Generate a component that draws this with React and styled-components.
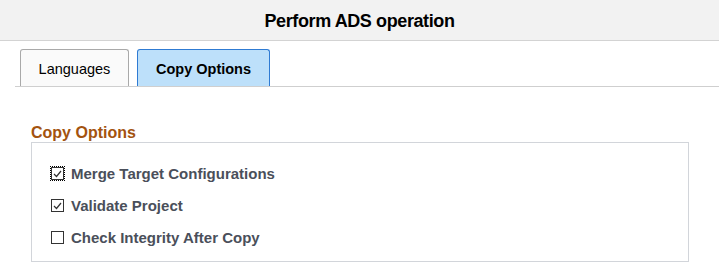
import React from "react";
import styled, { createGlobalStyle } from "styled-components";

const Global = createGlobalStyle`
  html, body { margin: 0; padding: 0; background: #ffffff; }
  body { font-family: "Liberation Sans", Arial, sans-serif; }
`;

const Page = styled.div`
  width: 719px;
  height: 268px;
  background: #fff;
  overflow: hidden;
`;

const Header = styled.header`
  height: 40px;
  background: #f2f2f2;
  border-bottom: 1px solid #d3d3d3;
  display: flex;
  align-items: center;
  justify-content: center;
`;

const Title = styled.h1`
  margin: 0;
  font-size: 18px;
  letter-spacing: -0.4px;
  font-weight: bold;
  color: #000;
  padding-top: 3px;
`;

const TabBar = styled.nav`
  display: flex;
  align-items: flex-end;
  gap: 8px;
  margin-left: 15px;
  padding-left: 5px;
  padding-top: 8px;
  border-bottom: 1px solid #cfcfcf;
`;

const Tab = styled.div`
  box-sizing: border-box;
  width: ${(p) => p.$w}px;
  height: 37px;
  display: flex;
  align-items: center;
  justify-content: center;
  font-size: 14.5px;
  color: #000;
  font-weight: ${(p) => (p.$active ? "bold" : "normal")};
  background: ${(p) => (p.$active ? "#bde0fa" : "#fafafa")};
  border: 1px solid ${(p) => (p.$active ? "#2f7bd3" : "#a9a9a9")};
  border-bottom: none;
  border-radius: 3px 3px 0 0;
  padding-top: 1px;
`;

const Section = styled.section`
  margin: 37px 0 0 31px;
  width: 658px;
`;

const SectionTitle = styled.h2`
  margin: 0;
  font-size: 16px;
  line-height: 18px;
  font-weight: bold;
  color: #a3530f;
`;

const Box = styled.div`
  box-sizing: border-box;
  height: 120px;
  border: 1px solid #d2d5da;
  padding: 24px 0 0 19px;
  display: flex;
  flex-direction: column;
  gap: 19px;
`;

const Row = styled.label`
  display: flex;
  align-items: center;
  gap: 7px;
  height: 13px;
  font-size: 15px;
  font-weight: bold;
  color: #4a4f5a;
`;

const Check = styled.span`
  box-sizing: border-box;
  width: 13px;
  height: 13px;
  border: 1px solid #333;
  background: #fff;
  display: flex;
  align-items: center;
  justify-content: center;
  flex: none;
  outline: ${(p) => (p.$focus ? "1px dotted #000" : "none")};
  outline-offset: 0px;
`;

const Label = styled.span`
  line-height: 16px;
  padding-top: 1px;
`;

function Checkbox({ checked, focus }) {
  return (
    <Check $focus={focus}>
      {checked && (
        <svg width="9" height="8" viewBox="0 0 9 8">
          <path d="M1 4 L3.5 6.5 L8 1" fill="none" stroke="#333" strokeWidth="1.2" />
        </svg>
      )}
    </Check>
  );
}

const options = [
  { label: "Merge Target Configurations", checked: true, focus: true },
  { label: "Validate Project", checked: true },
  { label: "Check Integrity After Copy", checked: false },
];

export default function App() {
  return (
    <Page>
      <Global />
      <Header>
        <Title>Perform ADS operation</Title>
      </Header>
      <TabBar>
        <Tab $w={109}>Languages</Tab>
        <Tab $w={133} $active>Copy Options</Tab>
      </TabBar>
      <Section>
        <SectionTitle>Copy Options</SectionTitle>
        <Box>
          {options.map((o) => (
            <Row key={o.label}>
              <Checkbox checked={o.checked} focus={o.focus} />
              <Label>{o.label}</Label>
            </Row>
          ))}
        </Box>
      </Section>
    </Page>
  );
}
